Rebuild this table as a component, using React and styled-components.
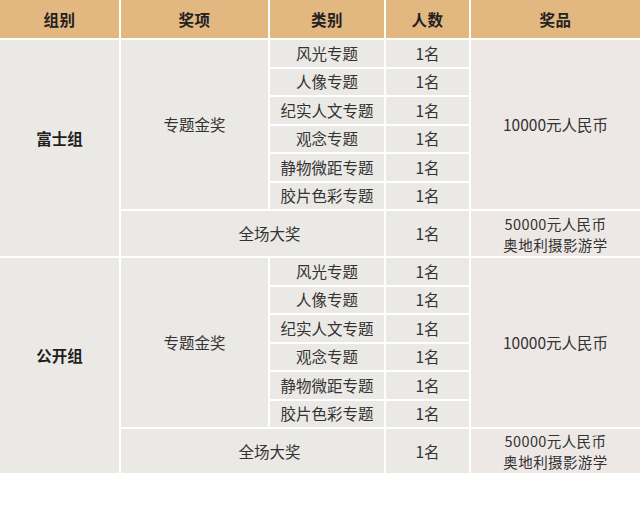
import React from "react";
import styled, { createGlobalStyle } from "styled-components";

const GlobalStyle = createGlobalStyle`
  html, body {
    margin: 0;
    padding: 0;
    background: #ffffff;
  }
  body {
    font-family: "Noto Sans CJK SC", "Noto Sans", sans-serif;
  }
`;

const groups = [{ name: "富士组" }, { name: "公开组" }];

const topics = [
  "风光专题",
  "人像专题",
  "纪实人文专题",
  "观念专题",
  "静物微距专题",
  "胶片色彩专题",
];

const Table = styled.div`
  display: grid;
  width: 640px;
  grid-template-columns: 119px 147px 114px 83px 169px;
  grid-template-rows: 38px repeat(6, 26.5px) 45px repeat(6, 26.5px) 44px;
  gap: 2px;
  background: #ffffff;
`;

const Head = styled.div`
  display: flex;
  align-items: center;
  justify-content: center;
  background: #e3b780;
  color: #222222;
  font-size: 15.5px;
  font-weight: 700;
  letter-spacing: 0.5px;
`;

const Cell = styled.div`
  display: flex;
  flex-direction: column;
  align-items: center;
  justify-content: center;
  background: ${(p) => (p.$tint ? "#ede8e6" : "#ebe9e6")};
  color: #333333;
  font-size: 15.5px;
  line-height: 19px;
  grid-row: span ${(p) => p.$rows || 1};
  grid-column: span ${(p) => p.$cols || 1};
  font-weight: ${(p) => (p.$bold ? 700 : 400)};
  ${(p) => p.$bold && "color: #1e1e1e; padding-bottom: 20px;"}
  ${(p) => p.$shift && "padding-left: 34px;"}
`;

const Line = styled.div`
  font-size: 14.5px;
  line-height: 21px;
  letter-spacing: 0.4px;
`;

const Group = ({ name }) => (
  <>
    <Cell $rows={7} $bold>
      {name}
    </Cell>
    <Cell $rows={6}>专题金奖</Cell>
    {topics.map((t, i) => (
      <React.Fragment key={t}>
        <Cell>{t}</Cell>
        <Cell>1名</Cell>
        {i === 0 && (
          <Cell $rows={6} $tint>
            10000元人民币
          </Cell>
        )}
      </React.Fragment>
    ))}
    <Cell $cols={2} $shift>
      全场大奖
    </Cell>
    <Cell>1名</Cell>
    <Cell $tint>
      <Line>50000元人民币</Line>
      <Line>奥地利摄影游学</Line>
    </Cell>
  </>
);

export default function App() {
  return (
    <>
      <GlobalStyle />
      <Table>
        <Head>组别</Head>
        <Head>奖项</Head>
        <Head>类别</Head>
        <Head>人数</Head>
        <Head>奖品</Head>
        {groups.map((g) => (
          <Group key={g.name} name={g.name} />
        ))}
      </Table>
    </>
  );
}
